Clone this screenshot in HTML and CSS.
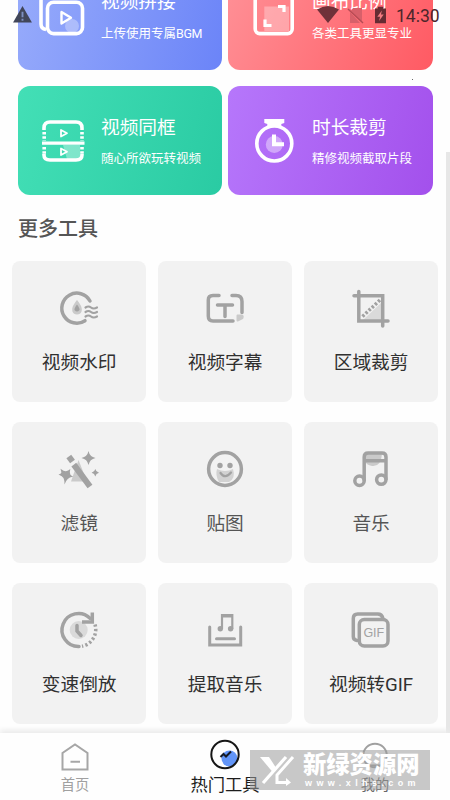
FILE: index.html
```
<!DOCTYPE html>
<html lang="zh-CN">
<head>
<meta charset="utf-8">
<title>热门工具</title>
<link rel="stylesheet" href="styles.css">
</head>
<body>
<div class="screen">
  <main class="content">
    <section class="heroes">
      <article class="hero blue">
        <svg class="hero-icon" viewBox="0 0 44 44" fill="none" stroke="#fff" stroke-width="3.6">
          <path d="M5 36.5C1 36 0 34 0 31V8Q0 1 7 1h22q6 0 7 5"/>
          <circle cx="31" cy="33" r="7" fill="#fff" fill-opacity=".3" stroke="none"/>
          <rect x="6.5" y="9.3" width="35" height="31.3" rx="6"/>
          <path d="M20.500 19v11.500l9.500-5.750z" stroke-width="2.400" stroke-linejoin="round"/>
        </svg>
        <div class="hero-text"><h2>视频拼接</h2><p>上传使用专属<span class="latin">BGM</span></p></div>
      </article>
      <article class="hero red">
        <svg class="hero-icon" viewBox="0 0 44 44" fill="none" stroke="#fff" stroke-width="3.600">
          <path d="M12.300 13.500H37V38H12.300z" fill="#fff" fill-opacity=".3" stroke="none"/>
          <rect x="3.200" y="2" width="37" height="38.600" rx="4.500"/>
          <path d="M26 13.500h6v5.500M13 26.500v6h6.500" stroke-width="3.200"/>
        </svg>
        <div class="hero-text"><h2>画布比例</h2><p>各类工具更显专业</p></div>
      </article>
      <article class="hero green">
        <svg class="hero-icon" viewBox="0 0 44 44" fill="none" stroke="#fff" stroke-width="3.600">
          <path d="M22 26h17v14H26z" fill="#fff" fill-opacity=".35" stroke="none"/>
          <path d="M3 11V9q0-6 6-6h26q6 0 6 6v2M3 35v1q0 5 6 5h26q6 0 6-5v-1"/>
          <path d="M1 24.200h42.500" stroke-width="3.200"/>
          <path d="M3.200 13v9M41 13v9M3.200 28v7M41 28v7" stroke-dasharray="2.500 1.700"/>
          <path d="M20 11v6.500l6-3.250zM20 29.500V36l6-3.250z" stroke-width="1.800" stroke-linejoin="round"/>
        </svg>
        <div class="hero-text"><h2>视频同框</h2><p>随心所欲玩转视频</p></div>
      </article>
      <article class="hero purple">
        <svg class="hero-icon" viewBox="0 0 44 44" fill="none" stroke="#fff" stroke-width="3.600">
          <path d="M12.300 0h20v4l-3 1v3h-14V5l-3-1z" fill="#fff" stroke="none"/>
          <circle cx="22.300" cy="24.500" r="17.500"/>
          <circle cx="22.300" cy="25.500" r="8.500" fill="#fff" fill-opacity=".4" stroke="none"/>
          <path d="M22 15.500v9.700h10" stroke-width="4"/>
        </svg>
        <div class="hero-text"><h2>时长裁剪</h2><p>精修视频截取片段</p></div>
      </article>
    </section>

    <h1 class="more">更多工具</h1>

    <section class="tools">
      <div class="tool">
        <svg class="tool-icon" viewBox="0 0 40 40">
          <path class="line" d="M31 13A15 15 0 1 0 26 32.700"/>
          <path d="M18 12C22 17 23.500 20 22.500 23.500Q21.500 26.500 18 26.500T13.500 23.500C12.500 20 14 17 18 12z" fill="#cacaca"/><path d="M18 16.500q3 4 2.500 5.500-2.500 3-5 0-.5-1.500 2.500-5.500z" fill="#a2a2a2"/>
          <path class="line thin" d="M26.500 19.500q3-2 5.500 0t6 0M26.500 24q3-2 5.500 0t6 0M26.500 28.500q3-2 5.500 0t6 0"/>
        </svg><span>视频水印</span>
      </div>
      <div class="tool">
        <svg class="tool-icon" viewBox="0 0 40 40">
          <path class="line" d="M14 7.500H8Q3.300 7.500 3.300 12v16q0 5 4.700 5h20M27 7.500h4q6 0 6 6v11M12.500 17h15M20 17v11.500"/>
          <path d="M32.500 27.500v5l5-2.500q1-3-2-2.500z" stroke="#cacaca" stroke-width="2" stroke-linejoin="round" fill="#cacaca"/>
        </svg><span>视频字幕</span>
      </div>
      <div class="tool">
        <svg class="tool-icon" viewBox="0 0 40 40">
          <path d="M30 15v17H12z" fill="#dadada"/>
          <path class="line" d="M7.800 3.500V33H37M3 7.700h28.700V38"/>
          <path class="line butt" d="M11.500 28.500L29 12" stroke-dasharray="2.500 1.800"/>
        </svg><span>区域裁剪</span>
      </div>
      <div class="tool soft">
        <svg class="tool-icon" viewBox="0 0 40 40" fill="#a2a2a2">
          <path d="M19.500 11L28 32.500H12z" fill="#cacaca"/>
          <path d="M14.800 15.600L31 37.500" stroke="#a2a2a2" stroke-width="6"/>
          <path d="M9.800 7.500l3.700 5" stroke="#a2a2a2" stroke-width="6"/>
          <path d="M29.500 2q1.200 5.800 7 7-5.800 1.200-7 7-1.200-5.800-7-7 5.800-1.200 7-7zM1.500 19.800q4 2.800 5.300 2.500 2.500-.3 4.500-2.300-1 3.500 0 5.500 1 1.500 3 2-4 .5-5.500 2.500Q7 31.500 5.500 35.500 5.500 31 4.500 29 3.500 27-.5 25.500q3.200-.7 2.800-2.500zM36.300 20q.7 3 3.700 3.700-3 .7-3.700 3.700-.7-3-3.700-3.700 3-.7 3.700-3.700z"/>
        </svg><span>滤镜</span>
      </div>
      <div class="tool soft">
        <svg class="tool-icon" viewBox="0 0 40 40">
          <path d="M12 20q8 4 16 0 3 9-4 13H14q-4-7-2-13z" fill="#d2d2d2"/>
          <circle class="line" cx="20" cy="20" r="16.400"/>
          <circle cx="15" cy="16.500" r="2.700" fill="#a2a2a2"/><circle cx="25" cy="16.500" r="2.700" fill="#a2a2a2"/>
          <path class="line thin" d="M15.500 24q4.500 6.500 10.500-.5"/>
        </svg><span>贴图</span>
      </div>
      <div class="tool soft">
        <svg class="tool-icon" viewBox="0 0 40 40">
          <path d="M14 5h17q-1 13-10 12-6-1-7-5z" fill="#cacaca"/>
          <path class="line" d="M13.200 31V8q0-4 4-4H31q4 0 4 4v22M13.200 11.700H35"/>
          <circle class="line" cx="8.500" cy="31.800" r="4.700"/><circle class="line" cx="30.300" cy="30.600" r="4.700"/>
        </svg><span>音乐</span>
      </div>
      <div class="tool">
        <svg class="tool-icon" viewBox="0 0 40 40">
          <circle cx="19.700" cy="20" r="9" fill="#dadada"/>
          <path class="line" d="M20 36.500A16.500 16.500 0 1 1 31 8.200"/>
          <path class="line butt" d="M33.300 2.500v9.500H23"/>
          <path class="line butt" d="M36 14.500A17 17 0 0 1 23 36.200" stroke-dasharray="2.300 2.200"/>
          <path class="line" d="M18 15.500V21l4 4.500"/>
        </svg><span>变速倒放</span>
      </div>
      <div class="tool">
        <svg class="tool-icon" viewBox="0 0 40 40">
          <path class="line mid" d="M4.700 17v18h31V17M11.500 28.800h18"/>
          <path class="line thin butt" d="M17 19V5.200h10.300V19" /><path class="line mid butt" d="M16 6h12"/>
          <circle cx="15.300" cy="18.800" r="2.700" fill="#a2a2a2"/><circle cx="25.600" cy="18.800" r="2.700" fill="#a2a2a2"/>
        </svg><span>提取音乐</span>
      </div>
      <div class="tool">
        <svg class="tool-icon" viewBox="0 0 40 40">
          <path class="line" d="M6 30.500q-3.700-.5-3.700-4V8.500q0-4.500 4.500-4.500h20q4 0 5 4"/>
          <rect class="line" x="8.300" y="9.500" width="28.700" height="26.500" rx="5"/>
          <text x="22.800" y="27.300" class="gif">GIF</text>
        </svg><span>视频转GIF</span>
      </div>
    </section>
  </main>

  <div class="scrollbar"></div>

  <nav class="tabs">
    <div class="tab">
      <svg class="tab-icon" viewBox="0 0 30 30" fill="none" stroke="#a6a6a6" stroke-width="2">
        <path d="M2.500 29.500V13L15 4.500 27.500 13v16.500zM10.500 21.700h9.500"/>
      </svg><span>首页</span>
    </div>
    <div class="tab active">
      <svg class="tab-icon" viewBox="0 0 30 30" fill="none">
        <circle cx="19.500" cy="18.500" r="8" fill="#6295f8"/>
        <path d="M10.500 17l3-3 2.500 2.500 5-5" stroke="#151a25" stroke-width="2"/>
        <circle cx="15" cy="14.500" r="13.700" stroke="#161616" stroke-width="2"/>
      </svg><span>热门工具</span>
    </div>
    <div class="tab mine">
      <svg class="tab-icon" viewBox="0 0 30 30" fill="none" stroke="#a0a0a0" stroke-width="2">
        <circle cx="15" cy="15.500" r="11.800"/><path d="M8 25.500h14"/>
      </svg><span>我的</span>
    </div>
  </nav>

  <header class="status">
    <svg class="warn" viewBox="0 0 20 18"><path d="M10 0l10 17.500H0z" fill="#414659"/><path d="M10 6v6M10 13.500v2" stroke="#7c8fc0" stroke-width="2"/></svg>
    <svg class="wifi" viewBox="0 0 22 17"><path d="M0 3.500Q11-3.500 22 3.500L11 17z" fill="#703139"/></svg>
    <svg class="sim" viewBox="0 0 16 17"><path d="M5 1h9v14L3 4z" fill="#d8606a"/><path d="M2 5l10 11H2z" fill="#d8606a"/><path d="M0 2l15 14" stroke="#b64b54" stroke-width="1.500"/></svg>
    <svg class="battery" viewBox="0 0 12 18"><path d="M0 2h3V0h6v2h3v16H0z" fill="#662b32"/><path d="M7.500 4L2.500 11h3L4.500 15.500l5-7h-3z" fill="#f27a80"/></svg>
    <time>14:30</time>
  </header>

  <div class="speck"></div>

  <aside class="brand">
    <svg class="brand-logo" viewBox="0 0 31 29" fill="none" stroke="#fff">
      <path d="M0 1h9l7.500 11.500-3.500 4z" fill="#fff" stroke="none"/>
      <path d="M26 1L3 27" stroke-width="3.200"/>
      <path d="M33 1L17 19v7.500h11" stroke-width="3"/>
      <path d="M26 22l5 4.500-5 3.500z" fill="#fff" stroke="none"/>
    </svg>
    <div class="brand-text"><strong>新绿资源网</strong><small>www.xlhs.com</small></div>
  </aside>
</div>
</body>
</html>
```
FILE: styles.css
```
* { box-sizing: border-box; margin: 0; padding: 0; }
body { background: #fefefe; font-family: Roboto, "Noto Sans CJK SC", sans-serif; }
.screen { position: relative; width: 450px; height: 800px; overflow: hidden; display: flex; flex-direction: column; }
svg { display: block; flex: none; overflow: visible; }

/* the list is shown scrolled part of the way down */
.content { flex: 1; min-height: 0; overflow: hidden; }
.heroes { margin: -39.500px 17.500px 0 18px; display: grid; grid-template-columns: 203.500px 204.500px; grid-auto-rows: 109px; gap: 16.500px 6.500px; }
.hero { border-radius: 12px; display: flex; align-items: center; gap: 16px; padding-left: 23px; color: #fff; }
.hero:nth-child(even) { padding-left: 24px; }
.blue { background: linear-gradient(105deg, #98acfb, #6b84f8); }
.red { background: linear-gradient(115deg, #ff9298, #ff5a63); }
.green { background: linear-gradient(105deg, #43dfb6, #2acba3); }
.purple { background: linear-gradient(105deg, #b677fb, #a350ec); }
.hero-icon { width: 44px; height: 44px; }
.hero-text { display: flex; flex-direction: column; gap: 11.500px; padding-top: 2px; white-space: nowrap; }
.hero h2 { font-size: 18.700px; line-height: 24px; font-weight: 400; }
.hero p { font-size: 12.500px; line-height: 16px; }
.latin { letter-spacing: -.4px; }

.more { margin: 20px 0 0 18px; font-size: 20px; line-height: 28px; font-weight: 500; color: #555; }
.tools { margin: 18px 0 0 12.300px; display: grid; grid-template-columns: repeat(3, 133.700px); grid-auto-rows: 141px; gap: 20px 12.300px; }
.tool { background: #f2f2f2; border-radius: 8px; padding-top: 27px; display: flex; flex-direction: column; align-items: center; gap: 21px; font-size: 18.700px; line-height: 28px; color: #303030; }
.tool.soft { color: #555; }
.tool-icon { width: 40px; height: 40px; }
.line { fill: none; stroke: #a2a2a2; stroke-width: 3.500; stroke-linecap: round; }
.mid { stroke-width: 3; }
.thin { stroke-width: 2.200; }
.butt { stroke-linecap: butt; }
.gif { font: 12.500px "Liberation Sans", sans-serif; fill: #a2a2a2; text-anchor: middle; }

.scrollbar { position: absolute; left: 445.500px; top: 151.500px; width: 4.500px; height: 582px; background: #e7e7e7; }

.tabs { position: relative; height: 67px; background: #fefefe; box-shadow: 0 -3px 5px #ebebeb; display: grid; grid-template-columns: repeat(3, 1fr); }
.tab { padding-top: 7px; display: flex; flex-direction: column; align-items: center; color: #a0a0a0; font-size: 14.300px; line-height: 24px; gap: 3px; }
.tab-icon { width: 30px; height: 30px; }
.tab.active { color: #1c1c1c; font-size: 17.300px; gap: 2.500px; }
.mine { color: #666; }

.status { position: absolute; inset: 0 0 auto 0; height: 32px; }
.status > * { position: absolute; }
.warn { left: 13px; top: 6px; width: 19px; height: 17px; }
.wifi { left: 317px; top: 6px; width: 22px; height: 17px; }
.sim { left: 348px; top: 7px; width: 16px; height: 17px; }
.battery { left: 375px; top: 6px; width: 11px; height: 18px; }
.status time { left: 396px; top: 5px; font: 400 17.500px/22px Roboto, sans-serif; color: #4c262b; }
.speck { position: absolute; left: 412px; top: 79px; width: 1px; height: 1px; background: #666; }

.brand { position: absolute; left: 250px; top: 750px; width: 180px; height: 40px; background: rgba(155, 155, 155, .55); display: flex; align-items: center; gap: 12px; padding-left: 10px; color: #fff; white-space: nowrap; }
.brand-logo { width: 31px; height: 29px; }
.brand-text { display: flex; flex-direction: column; }
.brand strong { font-size: 23.300px; line-height: 26px; font-weight: 900; }
.brand small { font: 700 9px/10px "Liberation Sans", sans-serif; letter-spacing: 4.400px; padding-left: 2px; }
```
